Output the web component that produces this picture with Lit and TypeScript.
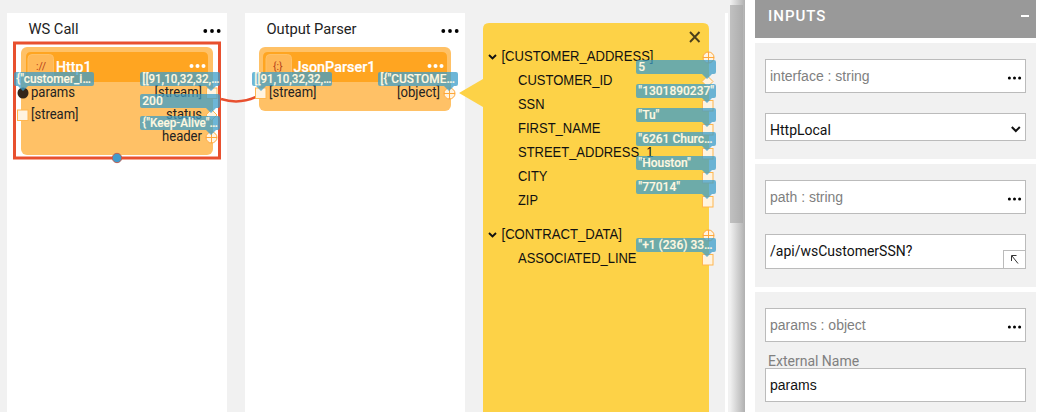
import { LitElement, html, svg, css, nothing } from "lit";
import { customElement } from "lit/decorators.js";

type Port = "square" | "diamond" | "cross" | "dot";

const portGlyph = (kind: Port, x: number, y: number) => {
  if (kind === "square")
    return svg`<rect x=${x - 5} y=${y - 5} width="10.5" height="10.5" fill="#fff3e0" stroke="#ffb64f"/>`;
  if (kind === "diamond")
    return svg`<path d=${`M${x} ${y - 5.5}l5.5 5.5l-5.5 5.5l-5.5 -5.5z`} fill="#fff3e0" stroke="#ffb64f"/>`;
  if (kind === "dot") return svg`<circle cx=${x} cy=${y} r="5.5" fill="#33261a"/>`;
  return svg`<circle cx=${x} cy=${y} r="5.5" fill="#fff3e0" stroke="#ffa73a"/>
    <path d=${`M${x - 5.5} ${y}h11M${x} ${y - 5.5}v11`} stroke="#ffa73a"/>`;
};

const bubble = (text: string, x: number, y: number, tip: number, len = 0, w = 80) => svg`
  <path d=${`M${x + 2} ${y}h${w - 4}q2 0 2 2v10q0 2 -2 2H${tip + 5}l-5 5l-5 -5H${x + 2}q-2 0 -2 -2v-10q0 -2 2 -2z`}
    fill="#3c9dc9" fill-opacity=".75"/>
  <text class="tag" x=${x + 2.3} y=${y + 11} textLength=${len || nothing} lengthAdjust="spacingAndGlyphs">${text}</text>`;

const dots = (x: number, y: number, fill: string, r = 1.9, step = 6.7) =>
  [0, 1, 2].map((i) => svg`<circle cx=${x + (i - 1) * step} cy=${y} r=${r} fill=${fill}/>`);

const port = (text: string, x: number, y: number, len: number) =>
  svg`<text class="port" x=${x} y=${y} textLength=${len} lengthAdjust="spacingAndGlyphs">${text}</text>`;

const fields: [string, number, string, Port, number][] = [
  ["CUSTOMER_ID", 85, "5", "diamond", 94.5],
  ["SSN", 109, "\"1301890237\"", "square", 26.5],
  ["FIRST_NAME", 133, "\"Tu\"", "square", 82.5],
  ["STREET_ADDRESS_1", 157, "\"6261 Churc…", "square", 135.5],
  ["CITY", 181, "\"Houston\"", "square", 29.5],
  ["ZIP", 205, "\"77014\"", "square", 20],
  ["ASSOCIATED_LINE", 263, "\"+1 (236) 33…", "square", 118.5],
];

@customElement("flow-canvas")
export class FlowCanvas extends LitElement {
  static styles = css`
    :host { display: block; width: 728px; height: 412px; overflow: hidden; background: #f1f1f1; }
    svg { display: block; }
    text { font-family: Roboto, sans-serif; font-size: 14px; fill: #222; white-space: pre; }
    .lane { font-size: 14.7px; fill: #222; }
    .name { font-size: 15px; font-weight: 500; fill: #fff; stroke: #fff; stroke-width: .2px; }
    .port { font-size: 13.8px; }
    .tree { font-family: "Liberation Sans", Arial, sans-serif; font-size: 14.3px; fill: #111; }
    .tag { font-size: 12px; font-weight: 500; fill: #fff8e1; stroke: #fff8e1; stroke-width: .15px; }
    .sym { font-size: 10.5px; fill: #b5401a; }
  `;

  render() {
    return html`<svg width="728" height="412" viewBox="0 0 728 412">
      <rect x="7" y="13" width="220" height="399" fill="#fff"/>
      <rect x="245" y="13" width="220" height="399" fill="#fff"/>
      <rect x="725" y="13" width="3" height="399" fill="#fff"/>
      <text class="lane" x="28.5" y="34" textLength="50">WS Call</text>
      <text class="lane" x="266.5" y="34" textLength="90">Output Parser</text>
      ${dots(212, 31, "#000")}${dots(450, 31, "#000")}

      <rect x="21" y="47" width="192" height="108" rx="6" fill="#ffc166"/>
      <path d="M26 82V57q0 -5 5 -5h172q5 0 5 5v25z" fill="#ffa521"/>
      <rect x="28" y="54.500" width="25.500" height="27" rx="4" fill="#ffb958" stroke="#ffc166"/>
      <text class="sym" x="36" y="70">://</text>
      <text class="name" x="56" y="72" textLength="35.5" lengthAdjust="spacingAndGlyphs">Http1</text>
      ${dots(197.500, 66, "#fff", 2, 6)}
      <path d="M221 99Q240 105 258 96" fill="none" stroke="#e8502f" stroke-width="2.500"/>
      <rect x="14.500" y="43" width="205" height="115" fill="none" stroke="#e8502f" stroke-width="3"/>
      <circle cx="117" cy="158" r="4.700" fill="#429bcb" stroke="#bb6054"/>
      ${portGlyph("dot", 23, 93)}${portGlyph("square", 22.5, 115)}
      ${portGlyph("square", 211.5, 93)}${portGlyph("diamond", 211.5, 115)}${portGlyph("cross", 211.5, 137.5)}
      ${port("params", 31, 97, 44)}${port("[stream]", 31, 119, 47.5)}
      ${port("[stream]", 154.5, 97, 47.5)}${port("status", 166, 119, 36)}${port("header", 162, 141, 40)}
      ${bubble('{"customer_i…', 14, 72, 23, 74.5)}
      ${bubble("[[91,10,32,32,…", 140, 72, 211, 77)}
      ${bubble("200", 140, 94, 211)}
      ${bubble('{"Keep-Alive"…', 140, 116, 211, 75.5)}

      <rect x="259" y="47" width="192" height="64" rx="6" fill="#ffc166"/>
      <path d="M263 82V57q0 -5 5 -5h174q5 0 5 5v25z" fill="#ffa521"/>
      <rect x="266" y="54.500" width="25.500" height="27" rx="4" fill="#ffb958" stroke="#ffc166"/>
      <text class="sym" x="273" y="70">{:}</text>
      <text class="name" x="293.500" y="72" textLength="82" lengthAdjust="spacingAndGlyphs">JsonParser1</text>
      ${dots(435.500, 66, "#fff", 2, 6)}
      ${portGlyph("square", 260.5, 93)}${portGlyph("cross", 449.5, 93.5)}
      ${port("[stream]", 269, 97, 47.5)}${port("[object]", 397, 97, 43)}
      ${bubble("[[91,10,32,32,…", 252, 72, 261, 77)}
      ${bubble('[{"CUSTOME…', 378, 72, 449, 74.5)}

      <path d="M459 93L483 79V29q0 -6 6 -6h214q6 0 6 6V412H483V107z" fill="#fdd247"/>
      <path d="M690 32l9.500 10M699.500 32l-9.500 10" fill="none" stroke="#4b3f1b" stroke-width="1.900"/>
      <path d="M489 55l3.500 3.500l3.500 -3.500M489 233l3.500 3.500l3.500 -3.500" fill="none" stroke="#111" stroke-width="1.900"/>
      <text class="tree" x="501.500" y="61" textLength="152" lengthAdjust="spacingAndGlyphs">[CUSTOMER_ADDRESS]</text>
      <text class="tree" x="501.500" y="239" textLength="120.500" lengthAdjust="spacingAndGlyphs">[CONTRACT_DATA]</text>
      ${portGlyph("cross", 708.5, 57.5)}${portGlyph("cross", 708.5, 235.5)}
      ${fields.map(([label, y, , kind, width]) => svg`
        <text class="tree" x="518" y=${y} textLength=${width} lengthAdjust="spacingAndGlyphs">${label}</text>
        ${portGlyph(kind, 707.5, y - 3.5)}`)}
      ${fields.map(([, y, value]) => bubble(value, 636, y - 25, 707))}
    </svg>`;
  }
}

@customElement("inputs-panel")
export class InputsPanel extends LitElement {
  static styles = css`
    :host { display: flex; flex-direction: column; gap: 5px; width: 281px; height: 412px; overflow: hidden;
      margin-left: 10px; font: 14px Roboto, sans-serif; color: #111; }
    header { display: flex; justify-content: space-between; box-sizing: border-box; height: 38px; flex: none;
      padding: 7px 7px 0 13px; background: #999; color: #fff; font-size: 15px; line-height: 18px; letter-spacing: 1px; font-weight: 500; }
    .minus { width: 8px; height: 2px; margin-top: 8px; background: #fff; }
    section { flex: none; box-sizing: border-box; padding: 16px 10px 0; background: #f1f1f1; }
    .first { height: 116px; }
    .second { height: 123px; }
    .third { height: 140px; }
    .box { display: flex; align-items: center; justify-content: space-between; box-sizing: border-box;
      height: 34px; width: 261px; padding: 0 3px 0 4px; border: 1px solid #bbb; background: #fff; }
    .title, .plain { font-family: "Liberation Sans", Arial, sans-serif; }
    .title { color: #808080; }
    .more { margin-top: 3px; }
    .select { height: 28px; margin-top: 20px; padding-top: 5px; }
    .path { height: 35px; margin-top: 20px; padding-right: 0; }
    .path span { margin-bottom: 2px; }
    .expand { align-self: flex-end; display: block; border-top: 1px solid #bbb; border-left: 1px solid #bbb; }
    .caption { height: 16px; margin: 10px 0 0 3px; line-height: 19px; color: #808080; }
  `;

  private titleBox(text: string) {
    return html`<div class="box title"><span>${text}</span>
      <svg class="more" width="15" height="6">${dots(7.5, 3, "#000", 1.5, 5.1)}</svg></div>`;
  }

  render() {
    return html`
      <header><span>INPUTS</span><span class="minus"></span></header>
      <section class="first">${this.titleBox("interface : string")}
        <div class="box select"><span>HttpLocal</span>
          <svg width="12" height="10"><path d="M1.800 2l4 4l4 -4" fill="none" stroke="#111" stroke-width="2"/></svg></div>
      </section>
      <section class="second">${this.titleBox("path : string")}
        <div class="box path"><span>/api/wsCustomerSSN?</span>
          <svg class="expand" width="21" height="17"><path d="M7.500 10V4.500h5M8 5l6 7.500" fill="none" stroke="#333"/></svg></div>
      </section>
      <section class="third">${this.titleBox("params : object")}
        <div class="caption">External Name</div>
        <div class="box plain"><span>params</span></div>
      </section>`;
  }
}

@customElement("app-root")
export class AppRoot extends LitElement {
  static styles = css`
    :host { display: flex; width: 1042px; height: 412px; overflow: hidden; background: #fff; }
    .rail { box-sizing: border-box; width: 17px; height: 412px; flex: none; padding: 5px 2px 0;
      background: linear-gradient(90deg, #f1f1f1 2px, #e4e4e4 5px, #b0b0b0 17px); }
    .thumb { width: 13px; height: 218px; background: linear-gradient(90deg, #c1c1c1, #adadad); }
  `;
  render() {
    return html`<flow-canvas></flow-canvas><div class="rail"><div class="thumb"></div></div><inputs-panel></inputs-panel>`;
  }
}
